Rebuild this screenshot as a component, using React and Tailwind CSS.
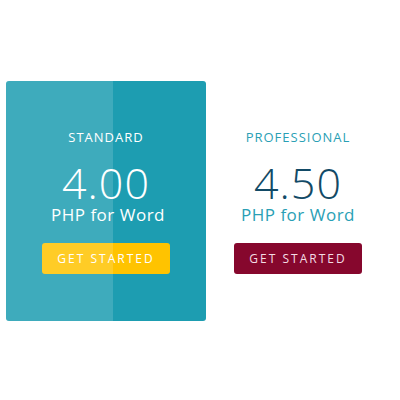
const plans = [
  { name: 'Standard', price: '4.00', featured: true },
  { name: 'Professional', price: '4.50', featured: false },
];

function PlanCard({ plan }) {
  if (plan.featured) {
    return (
      <div className="relative w-[200px] h-[240px] rounded-[3px] bg-[#1d9db1] overflow-hidden">
        {/* lighter left half */}
        <div className="absolute left-0 top-0 h-full w-[107px] bg-white/15" />
        <div className="relative flex flex-col items-center pt-[50px]">
          <p className="text-[13px] tracking-[1px] text-white leading-none">STANDARD</p>
          <p className="mt-[17px] text-[43px] font-light text-white leading-none tracking-[1px]">{plan.price}</p>
          <p className="mt-[2px] pl-[4px] text-[17px] text-white leading-none tracking-[0.5px]">PHP for Word</p>
          <button className="relative mt-[20px] w-[128px] h-[31px] rounded-[3px] bg-[#ffc300] text-white text-[12px] tracking-[2px] overflow-hidden">
            <span className="absolute left-0 top-0 h-full w-[71px] bg-white/15" />
            <span className="relative">GET STARTED</span>
          </button>
        </div>
      </div>
    );
  }
  return (
    <div className="w-[184px] h-[240px] flex flex-col items-center pt-[50px]">
      <p className="text-[13px] tracking-[1px] text-[#2a9fb5] leading-none">PROFESSIONAL</p>
      <p className="mt-[17px] text-[43px] font-light text-[#124a66] leading-none tracking-[1px]">{plan.price}</p>
      <p className="mt-[2px] text-[17px] text-[#2a9fb5] leading-none tracking-[0.5px]">PHP for Word</p>
      <button className="mt-[20px] w-[128px] h-[31px] rounded-[3px] bg-[#86072d] text-[#f3dde4] text-[12px] tracking-[2px]">
        GET STARTED
      </button>
    </div>
  );
}

export default function App() {
  return (
    <div className="w-[400px] h-[400px] bg-white font-['Open_Sans',sans-serif]">
      <div className="flex pt-[81px] pl-[6px]">
        {plans.map((plan) => (
          <PlanCard key={plan.name} plan={plan} />
        ))}
      </div>
    </div>
  );
}
